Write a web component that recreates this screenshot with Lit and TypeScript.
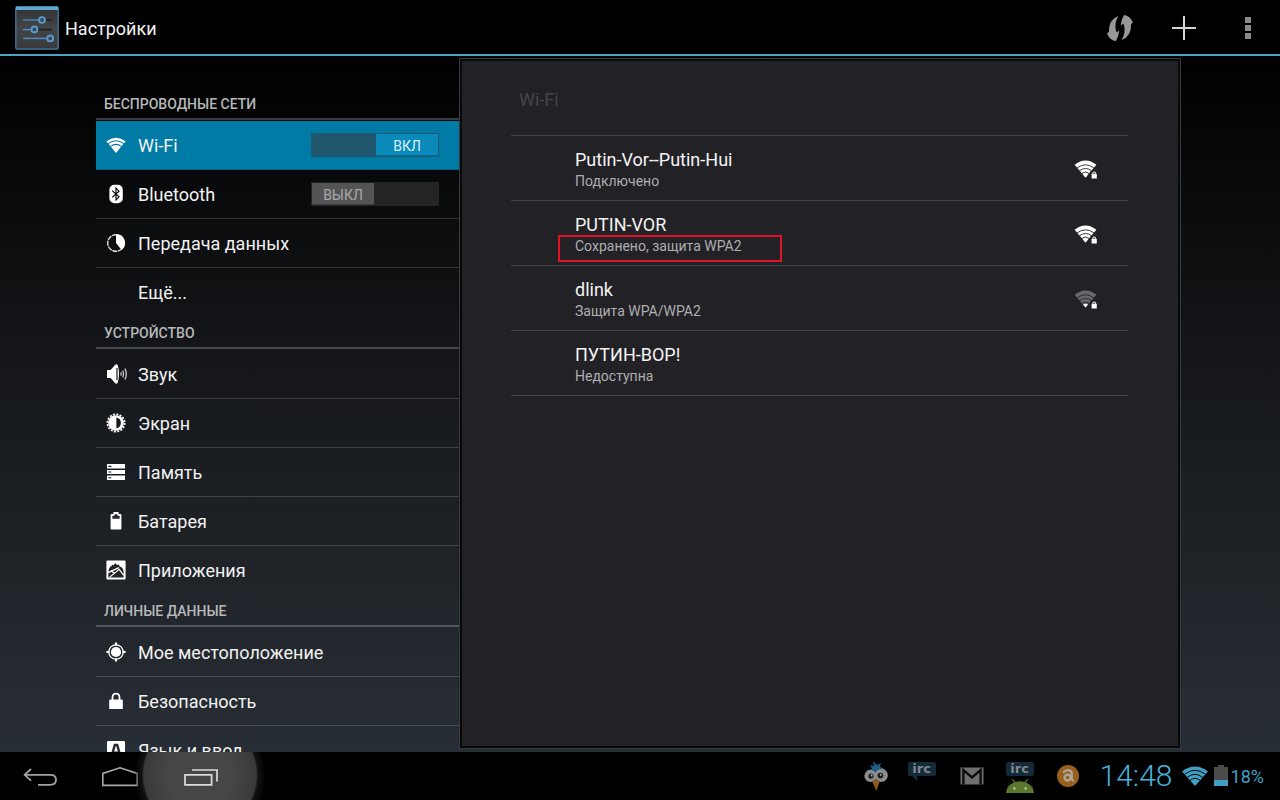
import { LitElement, html, css, svg, nothing } from "lit";
import { customElement, property, state } from "lit/decorators.js";

const WIFI_WEDGE = "M.6 4.8 Q11.5 -3.8 22.4 4.8 L11.5 17.5 Z";

const icons: Record<string, unknown> = {
  wifi: svg`<path d="M.4 6.2Q10-.8 19.6 6.2L10 18Z"/><path d="M2.2 8.6Q10 3 17.8 8.6M4.6 11.4Q10 7.4 15.4 11.4" fill="none" stroke="#007ba6" stroke-width="1.1"/>`,
  bluetooth: svg`<rect x="3.4" y="0.8" width="13.4" height="18.4" rx="5"/><path d="M6.2 6.6L13 12.8L10 15.8V4.2L13 7.2L6.2 13.4" fill="none" stroke="#0b0c0e" stroke-width="1.2"/>`,
  data: svg`<circle cx="10" cy="10" r="8.3" fill="none" stroke="#ddd" stroke-width="1.4" stroke-dasharray="5 .8"/><path d="M10 10V1A9 9 0 0 1 15.6 17Z"/>`,
  sound: svg`<path d="M1 6.6Q1 6 1.8 6H4.6L9.2 0.8Q10.8-.6 11.8 1.6Q13.2 6 13 10Q12.8 15 11.8 18.4Q10.8 20.4 9.2 19.2L4.6 14H1.8Q1 14 1 13.4Z"/><path d="M11 4V16" stroke="#15181b" stroke-width="1.2"/><path d="M14.8 8.4Q15.6 10 14.8 11.6M16.8 6.4Q18.4 10 16.8 13.6M19 4.4Q21.6 10 19 15.6" fill="none" stroke="#ccc" stroke-width="1.3"/>`,
  display: svg`<circle cx="10" cy="10" r="8.6" fill="none" stroke="#fff" stroke-width="1.8" stroke-dasharray="2 1.38"/><circle cx="10" cy="10" r="7.8"/><path d="M10.4 4.6A5.5 5.5 0 0 1 10.4 15.4Z" fill="#15181b"/>`,
  storage: svg`<path d="M1 2H19V6.6H1ZM1 8H19V12H1ZM1 13.4H19V18H1Z"/><path d="M2.4 4.4H5.4M2.4 10H5.4M2.4 15.8H5.4" stroke="#1b1e22" stroke-width="1.1"/>`,
  battery: svg`<path d="M7.4 1H12.6V3H14.4Q15.4 3 15.4 4V17.6Q15.4 18.6 14.4 18.6H5.6Q4.6 18.6 4.6 17.6V4Q4.6 3 5.6 3H7.4Z"/><path d="M6.4 4.8H8.6V3.2H11.4V4.8H13.6V7.8H6.4Z" fill="#22262a"/>`,
  apps: svg`<rect x=".4" y=".4" width="19.2" height="19.2" rx="1"/><path d="M2.4 12.4Q2.6 6.8 6 5.8L5.6 4.4L7.4 5.2L9.6 3L10.8 5L13 4.4L13.4 6.2Q17 7 17.6 11.4V17.6H2.4Z" fill="#22262a"/><path d="M2 12.6L13 7.6M3.4 17.4L13.2 9.4L17.8 15.4M4.8 10.6L8.6 13.4" fill="none" stroke="#fff" stroke-width="1.2"/>`,
  location: svg`<circle cx="10" cy="10" r="7.2" fill="none" stroke="#fff" stroke-width="1.3"/><circle cx="10" cy="10" r="5.1"/><path d="M10 .4V3.4M10 16.6V19.6M.4 10H3.4M16.6 10H19.6" stroke="#fff" stroke-width="2.2"/>`,
  lock: svg`<path fill-rule="evenodd" d="M5.6 8.4V6.6Q5.6 1.8 10 1.8T14.4 6.6V8.4H15.8Q16.8 8.4 16.8 9.4V18H3.2V9.4Q3.2 8.4 4.2 8.4ZM7.4 8.4H12.6V6.6Q12.6 3.6 10 3.6T7.4 6.6Z"/>`,
  language: svg`<rect x="1" y="1" width="18" height="18" rx="1.4"/><path d="M5.4 17L8.8 5H11.2L14.6 17M7 12.6H13" fill="none" stroke="#272c32" stroke-width="2.4"/>`,
};

interface Item {
  icon?: string;
  label: string;
  toggle?: boolean;
}

const sections: { title: string; items: Item[] }[] = [
  {
    title: "БЕСПРОВОДНЫЕ СЕТИ",
    items: [
      { icon: "wifi", label: "Wi-Fi", toggle: true },
      { icon: "bluetooth", label: "Bluetooth", toggle: false },
      { icon: "data", label: "Передача данных" },
      { label: "Ещё..." },
    ],
  },
  {
    title: "УСТРОЙСТВО",
    items: [
      { icon: "sound", label: "Звук" },
      { icon: "display", label: "Экран" },
      { icon: "storage", label: "Память" },
      { icon: "battery", label: "Батарея" },
      { icon: "apps", label: "Приложения" },
    ],
  },
  {
    title: "ЛИЧНЫЕ ДАННЫЕ",
    items: [
      { icon: "location", label: "Мое местоположение" },
      { icon: "lock", label: "Безопасность" },
      { icon: "language", label: "Язык и ввод" },
    ],
  },
];

const networks = [
  { name: "Putin-Vor--Putin-Hui", status: "Подключено", signal: "full" },
  { name: "PUTIN-VOR", status: "Сохранено, защита WPA2", signal: "full", marked: true },
  { name: "dlink", status: "Защита WPA/WPA2", signal: "low" },
  { name: "ПУТИН-ВОР!", status: "Недоступна", signal: "" },
];

@customElement("holo-switch")
class HoloSwitch extends LitElement {
  @property({ type: Boolean }) on = false;
  @property() label = "";

  static styles = css`
    :host { display: block; }
    .switch {
      position: relative;
      display: flex;
      box-sizing: border-box;
      width: 128px;
      height: 24px;
      padding: 1px;
      background: #242426;
      cursor: pointer;
    }
    .switch.on { justify-content: flex-end; background: #20566e; }
    .box { position: absolute; inset: 0; margin: 0; opacity: 0; }
    .thumb {
      box-sizing: border-box;
      width: 62px;
      height: 22px;
      border-bottom: 1px solid #3a3a3c;
      background: #545456;
      color: #a9a9ab;
      font-size: 14px;
      line-height: 24px;
      text-align: center;
    }
    .on .thumb { background: #0a8abb; border-color: #056b93; color: #d8f0fa; }
  `;

  render() {
    return html`<label class="switch ${this.on ? "on" : ""}">
      <input class="box" type="checkbox" role="switch" aria-label=${this.label} .checked=${this.on}
        @change=${() => (this.on = !this.on)} />
      <span class="thumb">${this.on ? "ВКЛ" : "ВЫКЛ"}</span>
    </label>`;
  }
}

@customElement("settings-nav")
class SettingsNav extends LitElement {
  @state() selected = "Wi-Fi";

  static styles = css`
    :host { display: block; }
    .nav { padding-top: 32px; }
    .heading {
      margin: 0 0 1px;
      padding: 2px 8px 0;
      border-bottom: 2px solid rgba(255, 255, 255, 0.22);
      color: #b6b8ba;
      font-size: 14px;
      font-weight: 500;
      line-height: 28px;
    }
    .list { margin: 0; padding: 0; list-style: none; }
    .row {
      display: flex;
      align-items: center;
      box-sizing: border-box;
      height: 49px;
      padding: 0 20px 0 10px;
      border-bottom: 1px solid rgba(255, 255, 255, 0.16);
    }
    .row:last-child { border-color: transparent; }
    .row.selected { background: #007ba6; border-color: #0c6585; }
    .link {
      display: flex;
      flex: 1;
      align-items: center;
      gap: 12px;
      color: #f2f2f2;
      font-size: 18px;
      line-height: 24px;
      text-decoration: none;
      white-space: nowrap;
    }
    .label { padding: 12px 0 10px; }
    .icon { width: 20px; height: 20px; fill: #fff; overflow: visible; }
  `;

  render() {
    return html`<nav class="nav">
      ${sections.map(
        (s) => html`<h2 class="heading">${s.title}</h2>
          <ul class="list">
            ${s.items.map(
              (i) => html`<li class="row ${i.label === this.selected ? "selected" : ""}">
                <a class="link" href="#" @click=${(e: Event) => { e.preventDefault(); this.selected = i.label; }}>
                  <svg class="icon" viewBox="0 0 20 20" aria-hidden="true">${i.icon ? icons[i.icon] : nothing}</svg>
                  <span class="label">${i.label}</span>
                </a>
                ${i.toggle === undefined ? nothing : html`<holo-switch .on=${i.toggle} label=${i.label}></holo-switch>`}
              </li>`
            )}
          </ul>`
      )}
    </nav>`;
  }
}

@customElement("network-list")
class NetworkList extends LitElement {
  static styles = css`
    :host { display: block; }
    .panel {
      box-sizing: border-box;
      height: 100%;
      border: 1px solid #38393d;
      background: #08090b;
      padding: 2px;
    }
    .body {
      box-sizing: border-box;
      height: 100%;
      padding: 0 50px 0 49px;
      background: #222126;
    }
    .title {
      margin: 0;
      padding: 28px 8px 24px;
      border-bottom: 1px solid #424246;
      color: #454548;
      font-size: 18px;
      font-weight: 400;
      line-height: 22px;
    }
    .list { margin: 0; padding: 0; list-style: none; }
    .row {
      display: flex;
      align-items: center;
      box-sizing: border-box;
      width: 100%;
      height: 65px;
      padding: 2px 30px 0 64px;
      border: 0;
      border-bottom: 1px solid #424246;
      background: none;
      color: #f4f4f4;
      font: inherit;
      text-align: left;
    }
    .text { flex: 1; padding-top: 2px; }
    .name { display: block; font-size: 18px; line-height: 22px; }
    .status { position: relative; display: block; color: #aeaeb0; font-size: 14px; line-height: 20px; }
    .mark {
      position: absolute;
      top: -1px;
      left: -17px;
      box-sizing: border-box;
      width: 224px;
      height: 27px;
      border: 2px solid #e0122a;
    }
    .signal { width: 24px; height: 19px; }
    .arcs { fill: #fff; }
    .low .arcs { fill: #69696c; }
  `;

  private signal(level: string) {
    return svg`<svg class="signal ${level}" viewBox="0 0 24 19" role="img" aria-label="Wi-Fi">
      <path class="arcs" d=${WIFI_WEDGE}/>
      <path d="M3 8Q11.5 1.6 20 8M5.4 10.8Q11.5 6.2 17.6 10.8M7.8 13.4Q11.5 10.6 15.2 13.4" fill="none" stroke="#222126" stroke-width=".9"/>
      <path d="M9 14.4Q11.5 13 14 14.4L11.5 17.5Z" fill="#fff"/>
      <path d="M16 11.6H24V19H16Z" fill="#222126"/>
      <path d="M17.6 18.4V13.8H18.4Q18.2 11.6 20.2 11.6T22 13.8H22.8V18.4ZM19.2 13.8H21.2Q21.2 12.5 20.2 12.5T19.2 13.8Z" fill="#fff" fill-rule="evenodd"/>
    </svg>`;
  }

  render() {
    return html`<section class="panel">
      <div class="body">
        <h2 class="title">Wi-Fi</h2>
        <ul class="list">
          ${networks.map(
            (n) => html`<li>
              <button class="row" type="button">
                <span class="text">
                  <span class="name">${n.name}</span>
                  <span class="status">${n.status}${n.marked ? html`<span class="mark"></span>` : nothing}</span>
                </span>
                ${n.signal ? html`${this.signal(n.signal)}` : nothing}
              </button>
            </li>`
          )}
        </ul>
      </div>
    </section>`;
  }
}

@customElement("system-bar")
class SystemBar extends LitElement {
  static styles = css`
    :host { display: block; }
    .bar {
      display: flex;
      justify-content: space-between;
      height: 48px;
      overflow: hidden;
      background: #000;
    }
    .keys, .status { display: flex; align-items: center; }
    .key {
      position: relative;
      width: 80px;
      height: 48px;
      padding: 0;
      border: 0;
      background: none;
    }
    .key svg { position: relative; display: block; margin: 0 auto; }
    .glow {
      position: absolute;
      top: -43px;
      left: -26px;
      width: 132px;
      height: 132px;
      background: radial-gradient(circle closest-side, #464745 0 50%, #3a3b39 85%, #121312 88%, transparent);
    }
    .cell { display: flex; justify-content: center; width: 48px; height: 48px; align-items: center; }
    .chat { display: flex; flex-direction: column; align-items: center; gap: 3px; padding-top: 2px; }
    .bubble {
      width: 28px;
      border-radius: 2px;
      background: #122a3a;
      color: #80868a;
      font: bold 13px/14px "DejaVu Sans", sans-serif;
      text-align: center;
    }
    .lifted { align-self: flex-start; padding: 10px 4px 0 0; }
    .tail { width: 5px; height: 5px; margin: -3px 14px 0 0; background: #122a3a; clip-path: polygon(0 0, 100% 0, 100% 100%); }
    .clock { min-width: 74px; margin: 0 8px; color: #46b0d8; font-size: 30px; font-weight: 300; line-height: 48px; }
    .percent { min-width: 33px; margin: 2px 16px 0 3px; color: #3fa0c4; font-size: 18px; line-height: 24px; }
    .battery { margin-left: 6px; }
  `;

  render() {
    return html`<footer class="bar">
      <div class="keys">
        <button class="key" type="button" aria-label="Назад">
          <svg width="36" height="20" viewBox="22 766 36 20" fill="none" stroke="#a2a2a2" stroke-width="1.8">
            <path d="M31 769L24.6 774.8L31 780.6M25 774.8H50.5Q56 774.8 56 779.8T50.5 784.8H38"/>
          </svg>
        </button>
        <button class="key" type="button" aria-label="Домой">
          <svg width="38" height="22" viewBox="101 765 38 22" fill="none" stroke="#a8a8a8" stroke-width="1.6">
            <path d="M102.8 785.4V773.4L120 767.8L137.2 773.4V785.4Z"/>
          </svg>
        </button>
        <button class="key" type="button" aria-label="Недавние приложения">
          <span class="glow"></span>
          <svg width="36" height="20" viewBox="182 766 36 20" fill="none" stroke="#dcdcdc" stroke-width="1.7">
            <path d="M185 774.8H211.6V784.8H185ZM192 770H217V781.4"/>
          </svg>
        </button>
      </div>
      <div class="status">
        <span class="cell">
          <svg width="26" height="32" viewBox="0 0 26 32" aria-hidden="true">
            <path d="M9 9L7 5L11 6L10 1L14 5L18 3L17 7L22 9Q24 18 18 22H8Q2 18 4 10Z" fill="#1f5c80"/>
            <circle cx="7.4" cy="16" r="6" fill="#8c8c8c"/><circle cx="18.4" cy="15.4" r="6.4" fill="#8c8c8c"/>
            <circle cx="8" cy="16" r="2.6" fill="#191919"/><circle cx="17.4" cy="15.6" r="2.8" fill="#191919"/>
            <circle cx="8.6" cy="15.4" r="1.1" fill="#999"/><circle cx="17.8" cy="14.8" r="1.1" fill="#999"/>
            <path d="M9 21Q13 18 16.8 21L13.4 31Z" fill="#8a5a1c"/>
          </svg>
        </span>
        <span class="cell"><span class="chat lifted"><span class="bubble">irc</span><span class="tail"></span></span></span>
        <span class="cell">
          <svg width="24" height="18" viewBox="0 0 24 18" aria-hidden="true">
            <rect x=".5" y=".5" width="23" height="17" fill="#6f6f6f"/>
            <path d="M3.4 17.5V3L12 10.4L20.6 3V17.5" fill="none" stroke="#0c0c0c" stroke-width="2.4"/>
          </svg>
        </span>
        <span class="cell">
          <span class="chat">
            <span class="bubble">irc</span>
            <svg width="28" height="14" viewBox="0 0 28 14" aria-hidden="true">
              <path d="M0 14Q.6 6.4 8 3.6L5.4.6L6.4 0L9.4 3Q14 1.6 18.6 3L21.6 0L22.6.6L20 3.6Q27.4 6.4 28 14Z" fill="#5a772c"/>
              <circle cx="8.4" cy="9.4" r="1.3" fill="#b4bba8"/><circle cx="19.6" cy="9.4" r="1.3" fill="#b4bba8"/>
            </svg>
          </span>
        </span>
        <span class="cell">
          <svg width="22" height="22" viewBox="0 0 22 22" aria-hidden="true">
            <circle cx="11" cy="11" r="11" fill="#96601a"/>
            <circle cx="10.6" cy="12.6" r="3" fill="none" stroke="#aca69c" stroke-width="2.4"/>
            <path d="M6 7.6Q9 4.4 12.4 5.4Q15 6.2 14.8 9.4V13.4Q15 16 17 15.4" fill="none" stroke="#aca69c" stroke-width="2.2"/>
          </svg>
        </span>
        <time class="clock">14:48</time>
        <svg width="26" height="20" viewBox="0 0 26 20" role="img" aria-label="Wi-Fi">
          <path d="M0 5.4Q13-4.6 26 5.4L13 20Z" fill="#3fa0c4"/>
          <path d="M2.6 8.2Q13 .4 23.4 8.2M5.2 11.4Q13 5.2 20.8 11.4M8 14.4Q13 10.4 18 14.4" fill="none" stroke="#000" stroke-width="1"/>
        </svg>
        <svg class="battery" width="14" height="22" viewBox="0 0 14 22" aria-hidden="true">
          <path d="M4 0H10V2H14V16H0V2H4Z" fill="#4b4b4b"/><path d="M0 15H14V21H0Z" fill="#3fa0c4"/>
        </svg>
        <span class="percent">18%</span>
      </div>
    </footer>`;
  }
}

@customElement("app-root")
class AppRoot extends LitElement {
  static styles = css`
    :host {
      display: flex;
      flex-direction: column;
      height: 100vh;
      overflow: hidden;
      background: #000;
      font-family: Roboto, "Noto Sans", sans-serif;
    }
    .header {
      display: flex;
      align-items: center;
      box-sizing: border-box;
      height: 56px;
      padding: 2px 0 0 15px;
      border-bottom: 2px solid #4ba3c7;
      background: #000;
    }
    .title { flex: 1; margin: 0 0 0 6px; padding-top: 2px; color: #f2f2f2; font-size: 18px; font-weight: 400; line-height: 24px; }
    .action { display: grid; place-items: center; width: 64px; height: 52px; padding: 0; border: 0; background: none; }
    .main {
      display: grid;
      grid-template-columns: 363fr 722fr;
      flex: 1;
      min-height: 0;
      padding: 0 99px 0 96px;
      background: linear-gradient(#000, #0c0d0f 25%, #1a1d21 58%, #282e35);
    }
    .side { min-height: 0; overflow: hidden; }
    .detail { margin: 2px 0 3px; }
  `;

  render() {
    return html`
      <header class="header">
        <svg width="44" height="44" viewBox="0 0 44 44" aria-hidden="true">
          <defs><linearGradient id="g" x2="0" y2="1"><stop stop-color="#2f3133"/><stop offset=".5" stop-color="#444547"/><stop offset="1" stop-color="#38393b"/></linearGradient></defs>
          <rect x=".8" y=".8" width="42.4" height="42.4" rx="1.5" fill="url(#g)" stroke="#3f7ca8" stroke-width="1.3"/>
          <path d="M1 .6H43V4H1Z" fill="#5fa9d0"/>
          <path d="M8 14H37M8 23.6H37M8 32.4H37" stroke="#1d2124" stroke-width="1.6"/>
          <path d="M8 14H27M8 23.6H19M8 32.4H35" stroke="#5689b8" stroke-width="1.6"/>
          <g fill="#3a4650" stroke="#5a9bcc" stroke-width="1.9"><circle cx="27" cy="14" r="2.9"/><circle cx="19.4" cy="23.4" r="2.9"/><circle cx="35.2" cy="32.4" r="2.9"/></g>
        </svg>
        <h1 class="title">Настройки</h1>
        <button class="action" type="button" aria-label="WPS">
          <svg width="26" height="26" viewBox="0 0 26 26" fill="#989898">
            <path d="M11.4 1Q1.8 4.2 1.8 17L0 18.4Q3 25.4 9 26Q11.6 22 12.2 15.8L9.4 17.2Q6.6 9 11.4 1Z"/>
            <path d="M14.6 25Q24.2 21.8 24.2 9L26 7.6Q23 .6 17 0Q14.4 4 13.8 10.2L16.6 8.8Q19.4 17 14.6 25Z"/>
          </svg>
        </button>
        <button class="action" type="button" aria-label="Добавить сеть">
          <svg width="24" height="24" viewBox="0 0 24 24"><path d="M0 12H24M12 0V24" stroke="#d4d4d4" stroke-width="2"/></svg>
        </button>
        <button class="action" type="button" aria-label="Меню">
          <svg width="6" height="22" viewBox="0 0 6 22"><path d="M0 0H6V6H0ZM0 8H6V14H0ZM0 16H6V22H0Z" fill="#8a8a8a"/></svg>
        </button>
      </header>
      <main class="main">
        <settings-nav class="side"></settings-nav>
        <network-list class="detail"></network-list>
      </main>
      <system-bar></system-bar>
    `;
  }
}
